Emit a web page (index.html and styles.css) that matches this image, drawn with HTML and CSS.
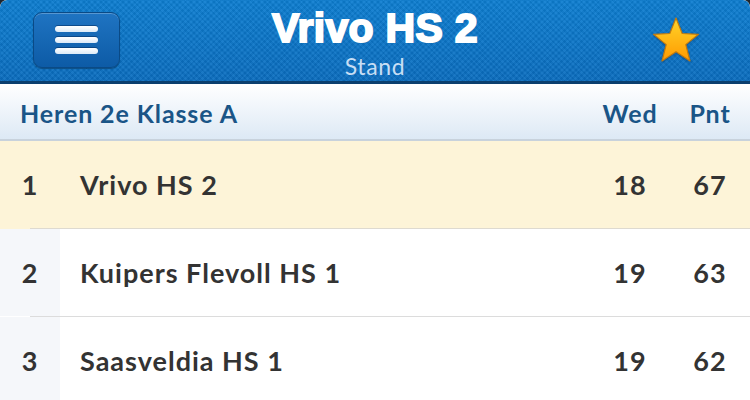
FILE: index.html
```html
<!DOCTYPE html>
<html lang="nl">
<head>
    <meta charset="UTF-8">
    <meta name="viewport" content="width=device-width, initial-scale=1.0">
    <title>Vrivo HS 2 - Stand</title>
    <link rel="stylesheet" href="styles.css">
</head>
<body>
    <div class="app">
        <div class="topbar">
            <div class="topbar-left">
                <button class="menu-btn" aria-label="Menu">
                    <span class="bar"></span>
                    <span class="bar"></span>
                    <span class="bar"></span>
                </button>
            </div>
            <div class="title">
                <h1>Vrivo HS 2</h1>
                <div class="subtitle">Stand</div>
            </div>
            <div class="topbar-right">
                <svg class="star" width="50" height="48" viewBox="0 0 50 48">
                    <defs>
                        <linearGradient id="starFill" x1="0" y1="0" x2="0" y2="1">
                            <stop offset="0" stop-color="#ffd42a"/>
                            <stop offset="1" stop-color="#ff9a00"/>
                        </linearGradient>
                    </defs>
                    <polygon points="25,2 31.2,17.5 47.5,18.3 34.8,28.6 39,45 25,35.8 11,45 15.2,28.6 2.5,18.3 18.8,17.5"
                             fill="url(#starFill)" stroke="#c07a10" stroke-width="1.2" stroke-linejoin="round"/>
                </svg>
            </div>
        </div>

        <div class="table-head">
            <div class="league">Heren 2e Klasse A</div>
            <div class="col">Wed</div>
            <div class="col">Pnt</div>
        </div>

        <div class="row own">
            <div class="pos">1</div>
            <div class="team">Vrivo HS 2</div>
            <div class="num">18</div>
            <div class="num">67</div>
        </div>
        <div class="row">
            <div class="pos">2</div>
            <div class="team">Kuipers Flevoll HS 1</div>
            <div class="num">19</div>
            <div class="num">63</div>
        </div>
        <div class="row">
            <div class="pos">3</div>
            <div class="team">Saasveldia HS 1</div>
            <div class="num">19</div>
            <div class="num">62</div>
        </div>
    </div>
</body>
</html>
```

FILE: styles.css
```css
html { background: #1c2630; }
body { margin: 0; font-family: Lato, "Open Sans", Arial, sans-serif; }
.app { width: 750px; height: 400px; overflow: hidden; background: #fff; border-radius: 7px 7px 0 0; }

/* blue header with fine checker texture */
.topbar { height: 81px; border-bottom: 3px solid #0b3f6e; display: grid; grid-template-columns: 1fr auto 1fr; align-items: start;
    background:
        repeating-linear-gradient(45deg, rgba(255,255,255,0.035) 0 2px, rgba(0,0,0,0.035) 2px 4px),
        repeating-linear-gradient(-45deg, rgba(255,255,255,0.035) 0 2px, rgba(0,0,0,0.035) 2px 4px),
        linear-gradient(#0c7dd0, #0a6dbf);
    border-radius: 7px 7px 0 0; }
.topbar-left { padding: 12px 0 0 33px; }
.menu-btn { width: 87px; height: 56px; border: 1px solid #0a4a86; border-radius: 9px; padding: 0; display: flex; flex-direction: column; align-items: center; justify-content: center; gap: 5px;
    background: linear-gradient(#1f74c2, #0d5ba6); box-shadow: inset 0 1px 0 rgba(255,255,255,0.25), 0 1px 1px rgba(0,0,0,0.3); }
.bar { display: block; width: 43px; height: 6px; border-radius: 3px; background: linear-gradient(#ffffff, #dceaf7); box-shadow: 0 -1px 0 rgba(0,40,90,0.5); }
.title { text-align: center; padding-top: 6px; }
.title h1 { margin: 0; font-family: "Liberation Sans", Arial, sans-serif; font-weight: 700; font-size: 41px; line-height: 44px; color: #fff; letter-spacing: 0.3px;
    -webkit-text-stroke: 2px #fff; text-shadow: 0 1px 1px rgba(0,40,90,0.5); }
.subtitle { font-family: Lato, sans-serif; font-size: 23px; line-height: 24px; color: #c7def4; margin-top: 4px; letter-spacing: 0.6px; }
.topbar-right { display: flex; justify-content: flex-end; padding: 16px 49px 0 0; }
.star { filter: drop-shadow(0 1px 1px rgba(0,30,70,0.35)); }

/* table header */
.table-head { height: 55px; border-bottom: 2px solid #c8d2dc; background: linear-gradient(#ffffff, #dde9f5); display: grid; grid-template-columns: 1fr 80px 80px; align-items: center;
    color: #1a5587; font-weight: 700; font-size: 25px; letter-spacing: 0.9px; }
.league { padding-left: 20px; padding-top: 2px; }
.col { text-align: center; padding-top: 2px; }

/* standings rows */
.row { height: 87px; display: grid; grid-template-columns: 60px 1fr 80px 80px; align-items: center; color: #333; font-weight: 700; font-size: 27px; letter-spacing: 1px;
    background: linear-gradient(#dcdcdc, #dcdcdc) right bottom / calc(100% - 30px) 1px no-repeat; padding-bottom: 1px; }
.row .pos { height: 100%; display: flex; align-items: center; justify-content: center; background: #f5f7fa; }
.row.own { background: linear-gradient(#dedad0, #dedad0) right bottom / calc(100% - 30px) 1px no-repeat, #fdf4d8; }
.row.own .pos { background: transparent; }
.team { padding-left: 20px; }
.num { text-align: center; }
```
